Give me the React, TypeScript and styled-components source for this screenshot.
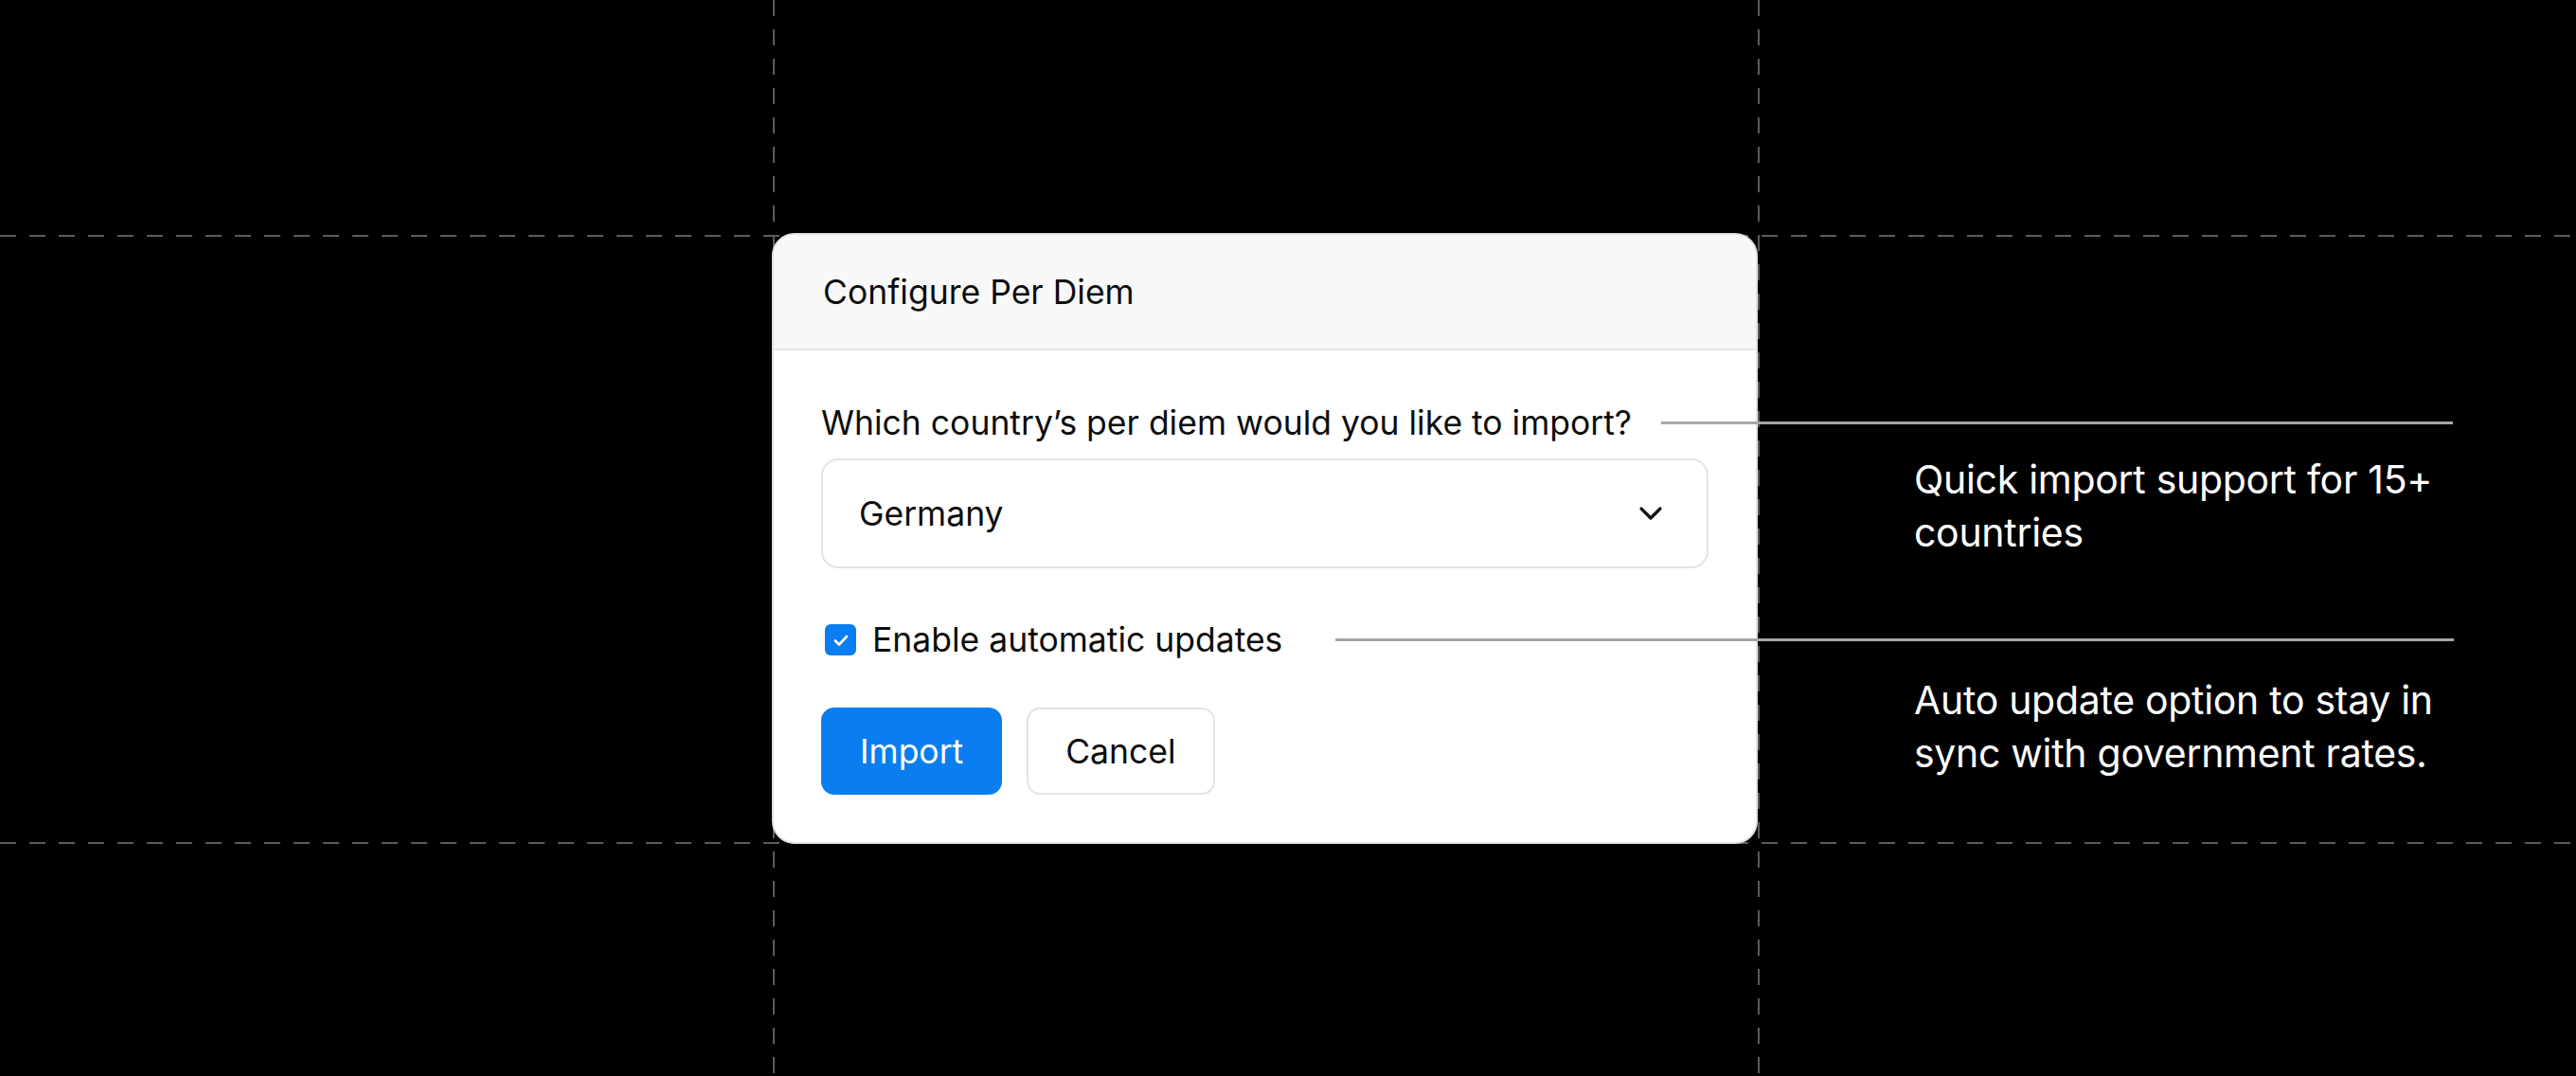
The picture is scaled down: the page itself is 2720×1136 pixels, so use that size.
import styled, { createGlobalStyle } from "styled-components";

const GlobalStyle = createGlobalStyle`
  html, body {
    margin: 0;
    padding: 0;
    background: #000;
  }
  body {
    font-family: "Inter", "Noto Sans", sans-serif;
    -webkit-font-smoothing: antialiased;
  }
`;

const Page = styled.div`
  position: relative;
  width: 2720px;
  height: 1136px;
  overflow: hidden;
  background: #000;
`;

// dashed layout guides drawn under the dialog
const HGuide = styled.div<{ $top: number }>`
  position: absolute;
  left: 0;
  right: 0;
  top: ${(p) => p.$top}px;
  height: 2px;
  background: repeating-linear-gradient(
    to right,
    #5c5c5c 0 17px,
    transparent 17px 31px
  );
`;

const VGuide = styled.div<{ $left: number }>`
  position: absolute;
  top: 0;
  bottom: 0;
  left: ${(p) => p.$left}px;
  width: 2px;
  background: repeating-linear-gradient(
    to bottom,
    #5c5c5c 0 17px,
    transparent 17px 31px
  );
`;

const Stage = styled.div`
  position: relative;
  display: flex;
  flex-direction: row;
  align-items: flex-start;
  padding: 246px 0 0 815px;
`;

const Dialog = styled.div`
  width: 1041px;
  box-sizing: border-box;
  background: #fff;
  border: 2px solid #e2e2e2;
  border-radius: 24px;
`;

const Header = styled.div`
  display: flex;
  align-items: center;
  height: 120px;
  padding: 0 52px;
  background: #f8f8f8;
  border-bottom: 2px solid #e6e6e6;
  border-radius: 22px 22px 0 0;
`;

const Title = styled.h2`
  margin: 0;
  font-size: 35.5px;
  font-weight: 400;
  color: #0d0d0d;
`;

const Body = styled.div`
  display: flex;
  flex-direction: column;
  padding: 56px 50px 50px;
`;

const Row = styled.div<{ $gap: number }>`
  display: flex;
  align-items: center;
  gap: ${(p) => p.$gap}px;
  white-space: nowrap;
`;

const Label = styled.span`
  font-size: 35.5px;
  line-height: 41px;
  color: #0d0d0d;
`;

const Connector = styled.div<{ $width: number }>`
  flex: none;
  width: ${(p) => p.$width}px;
  height: 3px;
  background: #a6a6a6;
`;

const Select = styled.div`
  display: flex;
  align-items: center;
  justify-content: space-between;
  height: 116px;
  box-sizing: border-box;
  margin-top: 17px;
  padding: 0 46px 0 38px;
  border: 2px solid #e4e4e4;
  border-radius: 18px;
  font-size: 35.5px;
  color: #0d0d0d;
`;

const CheckRow = styled(Row)`
  margin-top: 55px;
  padding-left: 4px;
`;

const Check = styled.span`
  flex: none;
  display: flex;
  align-items: center;
  justify-content: center;
  width: 33px;
  height: 33px;
  border-radius: 6px;
  background: #0a7ef0;
`;

const Buttons = styled.div`
  display: flex;
  gap: 26px;
  margin-top: 51px;
`;

const Button = styled.button<{ $primary?: boolean }>`
  height: 92px;
  box-sizing: border-box;
  padding: 0 39px;
  border-radius: 14px;
  border: 2px solid ${(p) => (p.$primary ? "#0a7ef0" : "#e4e4e4")};
  background: ${(p) => (p.$primary ? "#0a7ef0" : "#fff")};
  color: ${(p) => (p.$primary ? "#fff" : "#0d0d0d")};
  font-family: "Inter", sans-serif;
  font-size: 35.5px;
  cursor: pointer;
`;

const Notes = styled.div`
  display: flex;
  flex-direction: column;
  gap: 121px;
  margin-left: 165px;
  padding-top: 232px;
`;

const Note = styled.p`
  margin: 0;
  font-size: 41px;
  line-height: 56px;
  color: #fff;
  letter-spacing: -0.3px;
`;

const Chevron = () => (
  <svg width="26" height="16" viewBox="0 0 26 16" fill="none">
    <path d="M3 3l10 10L23 3" stroke="#111" strokeWidth="3.2" strokeLinecap="round" strokeLinejoin="round" />
  </svg>
);

const Tick = () => (
  <svg width="18" height="14" viewBox="0 0 18 14" fill="none">
    <path d="M3 7.5l4 4L15 3" stroke="#fff" strokeWidth="2.6" strokeLinecap="round" strokeLinejoin="round" />
  </svg>
);

export default function App() {
  return (
    <Page>
      <GlobalStyle />
      <HGuide $top={248} />
      <HGuide $top={889} />
      <VGuide $left={816} />
      <VGuide $left={1856} />
      <Stage>
        <Dialog>
          <Header>
            <Title>Configure Per Diem</Title>
          </Header>
          <Body>
            <Row $gap={31}>
              <Label>Which country’s per diem would you like to import?</Label>
              <Connector $width={836} />
            </Row>
            <Select>
              <span>Germany</span>
              <Chevron />
            </Select>
            <CheckRow $gap={17}>
              <Check>
                <Tick />
              </Check>
              <Label>Enable automatic updates</Label>
              <Connector $width={1181} style={{ marginLeft: 39 }} />
            </CheckRow>
            <Buttons>
              <Button $primary>Import</Button>
              <Button>Cancel</Button>
            </Buttons>
          </Body>
        </Dialog>
        <Notes>
          <Note>
            Quick import support for 15+
            <br />
            countries
          </Note>
          <Note>
            Auto update option to stay in
            <br />
            sync with government rates.
          </Note>
        </Notes>
      </Stage>
    </Page>
  );
}
